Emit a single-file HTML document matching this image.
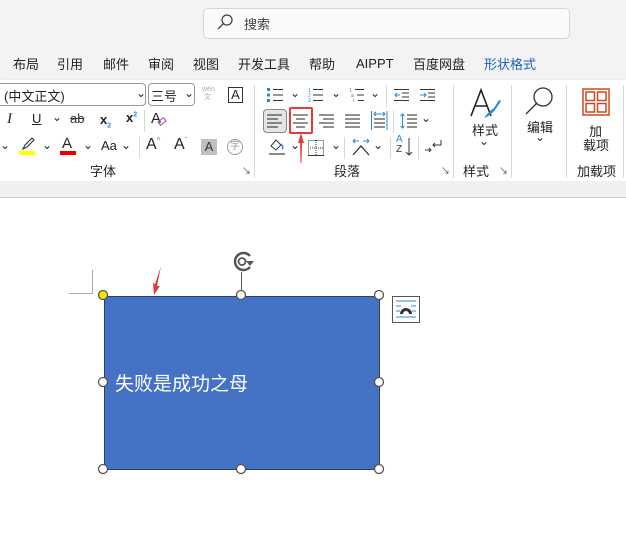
<!DOCTYPE html>
<html><head><meta charset="utf-8"><style>
*{margin:0;padding:0;box-sizing:border-box}
body{width:626px;height:537px;overflow:hidden;background:#fff;font-family:"Liberation Sans","Noto Sans CJK SC",sans-serif;position:relative;color:#222}
.a{position:absolute}
.t{position:absolute;font-size:13px;white-space:nowrap}
.s{font-size:12px}
.vs{position:absolute;width:1px;background:#d8d8d8}
svg{position:absolute;overflow:visible}
</style></head><body>
<div class="a" style="left:0;top:0;width:626px;height:80px;background:#f3f3f3"></div>
<div class="a" style="left:203px;top:8px;width:367px;height:31px;background:#fafafa;border:1px solid #d4d4d4;border-radius:5px"></div>
<svg style="left:217px;top:14px" width="16" height="16"><circle cx="10" cy="6" r="5" fill="none" stroke="#444" stroke-width="1.3"/><line x1="6.5" y1="9.5" x2="1" y2="15" stroke="#444" stroke-width="1.3"/></svg>
<div class="t" style="left:244px;top:14px;color:#444">搜索</div>
<div class="t" style="left:13px;top:54px">布局</div>
<div class="t" style="left:57px;top:54px">引用</div>
<div class="t" style="left:103px;top:54px">邮件</div>
<div class="t" style="left:148px;top:54px">审阅</div>
<div class="t" style="left:193px;top:54px">视图</div>
<div class="t" style="left:238px;top:54px">开发工具</div>
<div class="t" style="left:309px;top:54px">帮助</div>
<div class="t" style="left:356px;top:56px">AIPPT</div>
<div class="t" style="left:413px;top:54px">百度网盘</div>
<div class="t" style="left:484px;top:54px;color:#1f5fbf">形状格式</div>
<!-- ribbon -->
<div class="a" style="left:0;top:80px;width:626px;height:101px;background:#fff;box-shadow:0 1px 3px rgba(0,0,0,.15)"></div>
<div class="a" style="left:0;top:181px;width:626px;height:17px;background:#f0f0f0;border-bottom:1px solid #ccc"></div>
<!-- font group -->
<div class="a" style="left:-4px;top:83px;width:150px;height:23px;border:1px solid #999;border-radius:4px;background:#fff"></div>
<div class="t" style="left:4px;top:86px;color:#222">(中文正文)</div>
<div class="t s" style="left:136px;top:86px">⌄</div>
<div class="a" style="left:148px;top:83px;width:47px;height:23px;border:1px solid #999;border-radius:4px"></div>
<div class="t" style="left:151px;top:86px">三号</div>
<div class="t s" style="left:184px;top:86px">⌄</div>
<div class="t" style="left:202px;top:86px;font-size:7px;color:#aaa;line-height:8px">wén<br>&nbsp;文</div>
<div class="a" style="left:228px;top:87px;width:15px;height:16px;border:1px solid #333;font-size:13px;text-align:center;line-height:14px">A</div>
<div class="t" style="left:7px;top:111px;font-style:italic;font-family:'Liberation Serif',serif;font-size:15px">I</div>
<div class="t" style="left:32px;top:111px;text-decoration:underline">U</div>
<div class="t s" style="left:52px;top:110px">⌄</div>
<div class="t" style="left:70px;top:111px;text-decoration:line-through;color:#333">ab</div>
<div class="t" style="left:100px;top:112px;font-weight:bold">x<sub style="font-size:7px;color:#2b88d8">2</sub></div>
<div class="t" style="left:126px;top:110px;font-weight:bold">x<sup style="font-size:7px;color:#2b88d8">2</sup></div>
<div class="vs" style="left:144px;top:110px;height:22px"></div>
<div class="t" style="left:151px;top:110px;font-size:15px">A</div>
<div class="a" style="left:158px;top:119px;width:8px;height:5px;border:1.5px solid #b03cc0;transform:rotate(-40deg)"></div>
<div class="t s" style="left:0;top:138px">⌄</div>
<div class="a" style="left:19px;top:151px;width:16px;height:4px;background:#ffff00"></div>
<svg style="left:21px;top:137px" width="14" height="13"><path d="M2 12 L4 8 L11 1 L13 3 L6 10 Z" fill="none" stroke="#333" stroke-width="1.1"/></svg>
<div class="t s" style="left:42px;top:138px">⌄</div>
<div class="a" style="left:60px;top:151px;width:16px;height:4px;background:#e00"></div>
<div class="t" style="left:62px;top:135px;font-size:15px">A</div>
<div class="t s" style="left:83px;top:138px">⌄</div>
<div class="t" style="left:101px;top:138px">Aa</div>
<div class="t s" style="left:121px;top:138px">⌄</div>
<div class="vs" style="left:139px;top:136px;height:22px"></div>
<div class="t" style="left:146px;top:136px;font-size:16px">A<span style="font-size:8px;color:#2b88d8;vertical-align:top">^</span></div>
<div class="t" style="left:174px;top:136px;font-size:16px">A<span style="font-size:8px;color:#2b88d8;vertical-align:top">ˇ</span></div>
<div class="a" style="left:201px;top:139px;width:16px;height:16px;background:#c0c0c0;font-size:13px;text-align:center;line-height:16px;color:#333">A</div>
<div class="a" style="left:227px;top:139px;width:16px;height:16px;border:1.3px solid #999;border-radius:50%;font-size:10px;text-align:center;line-height:14px;color:#999">字</div>
<div class="t" style="left:90px;top:161px">字体</div>
<div class="t" style="left:242px;top:164px;font-size:9px;color:#444">↘</div>
<div class="vs" style="left:254px;top:85px;height:93px"></div>
<!-- paragraph -->
<svg style="left:267px;top:88px" width="30" height="14"><g fill="#2b88d8"><rect x="0" y="0" width="3" height="3"/><rect x="0" y="5.5" width="3" height="3"/><rect x="0" y="11" width="3" height="3"/></g><g stroke="#333"><line x1="6" y1="1.5" x2="16" y2="1.5"/><line x1="6" y1="7" x2="16" y2="7"/><line x1="6" y1="12.5" x2="16" y2="12.5"/></g></svg>
<div class="t s" style="left:290px;top:86px">⌄</div>
<svg style="left:308px;top:88px" width="30" height="14"><g font-size="5" fill="#2b88d8" font-family="Liberation Sans"><text x="0" y="4">1</text><text x="0" y="9">2</text><text x="0" y="14">3</text></g><g stroke="#333"><line x1="5" y1="1.5" x2="15" y2="1.5"/><line x1="5" y1="7" x2="15" y2="7"/><line x1="5" y1="12.5" x2="15" y2="12.5"/></g></svg>
<div class="t s" style="left:331px;top:86px">⌄</div>
<svg style="left:349px;top:88px" width="30" height="14"><g font-size="5" fill="#2b88d8" font-family="Liberation Sans"><text x="0" y="4">1</text><text x="2" y="9">a</text><text x="4" y="14">i</text></g><g stroke="#333"><line x1="6" y1="1.5" x2="15" y2="1.5"/><line x1="8" y1="7" x2="15" y2="7"/><line x1="9" y1="12.5" x2="15" y2="12.5"/></g></svg>
<div class="t s" style="left:370px;top:86px">⌄</div>
<div class="vs" style="left:386px;top:85px;height:22px"></div>
<svg style="left:394px;top:88px" width="16" height="14"><g stroke="#333"><line x1="0" y1="1.5" x2="15" y2="1.5"/><line x1="8" y1="5" x2="15" y2="5"/><line x1="8" y1="9" x2="15" y2="9"/><line x1="0" y1="12.5" x2="15" y2="12.5"/></g><path d="M6 7H1M3 5L1 7L3 9" stroke="#2b88d8" fill="none"/></svg>
<svg style="left:420px;top:88px" width="16" height="14"><g stroke="#333"><line x1="0" y1="1.5" x2="15" y2="1.5"/><line x1="8" y1="5" x2="15" y2="5"/><line x1="8" y1="9" x2="15" y2="9"/><line x1="0" y1="12.5" x2="15" y2="12.5"/></g><path d="M0 7H6M4 5L6 7L4 9" stroke="#2b88d8" fill="none"/></svg>
<div class="a" style="left:263px;top:109px;width:24px;height:24px;background:#e5e5e5;border:1px solid #888;border-radius:4px"></div>
<svg style="left:267px;top:114px" width="16" height="14"><g stroke="#222"><line x1="0" y1="1" x2="15" y2="1"/><line x1="0" y1="5" x2="11" y2="5"/><line x1="0" y1="9" x2="15" y2="9"/><line x1="0" y1="13" x2="11" y2="13"/></g></svg>
<div class="a" style="left:289px;top:107px;width:24px;height:27px;border:2px solid #e83a3a;border-radius:2px"></div>
<svg style="left:293px;top:114px" width="16" height="14"><g stroke="#222"><line x1="0" y1="1" x2="15" y2="1"/><line x1="3" y1="5" x2="12" y2="5"/><line x1="0" y1="9" x2="15" y2="9"/><line x1="3" y1="13" x2="12" y2="13"/></g></svg>
<svg style="left:319px;top:114px" width="16" height="14"><g stroke="#222"><line x1="0" y1="1" x2="15" y2="1"/><line x1="4" y1="5" x2="15" y2="5"/><line x1="0" y1="9" x2="15" y2="9"/><line x1="4" y1="13" x2="15" y2="13"/></g></svg>
<svg style="left:345px;top:114px" width="16" height="14"><g stroke="#222"><line x1="0" y1="1" x2="15" y2="1"/><line x1="0" y1="5" x2="15" y2="5"/><line x1="0" y1="9" x2="15" y2="9"/><line x1="0" y1="13" x2="15" y2="13"/></g></svg>
<svg style="left:371px;top:111px" width="17" height="20"><g stroke="#2b88d8"><line x1="0.5" y1="0" x2="0.5" y2="19"/><line x1="16" y1="0" x2="16" y2="19"/><path d="M3 3H14M5 1L3 3L5 5M12 1L14 3L12 5" fill="none"/></g><g stroke="#222"><line x1="3" y1="8" x2="14" y2="8"/><line x1="3" y1="12" x2="14" y2="12"/><line x1="3" y1="16" x2="14" y2="16"/></g></svg>
<div class="vs" style="left:393px;top:111px;height:22px"></div>
<svg style="left:400px;top:113px" width="18" height="16"><path d="M2.5 1V15M0.5 3L2.5 1L4.5 3M0.5 13L2.5 15L4.5 13" stroke="#2b88d8" fill="none"/><g stroke="#222"><line x1="7" y1="2" x2="17" y2="2"/><line x1="7" y1="6" x2="17" y2="6"/><line x1="7" y1="10" x2="17" y2="10"/><line x1="7" y1="14" x2="17" y2="14"/></g></svg>
<div class="t s" style="left:421px;top:111px">⌄</div>
<svg style="left:268px;top:138px" width="18" height="18"><path d="M3 8L8 2L13 7L8 12Z" fill="none" stroke="#333"/><path d="M13 6q3 3 1 5" stroke="#2b88d8" fill="none" stroke-width="1.5"/><line x1="1" y1="16" x2="17" y2="16" stroke="#888" stroke-width="2"/></svg>
<div class="t s" style="left:290px;top:138px">⌄</div>
<svg style="left:308px;top:140px" width="16" height="16"><rect x="0.5" y="0.5" width="15" height="15" fill="none" stroke="#333" stroke-dasharray="1 1"/><line x1="8" y1="0" x2="8" y2="16" stroke="#333" stroke-dasharray="1 1"/><line x1="0" y1="8" x2="16" y2="8" stroke="#333" stroke-dasharray="1 1"/><line x1="0" y1="15.5" x2="16" y2="15.5" stroke="#333"/></svg>
<div class="t s" style="left:331px;top:138px">⌄</div>
<div class="vs" style="left:344px;top:137px;height:22px"></div>
<svg style="left:351px;top:138px" width="20" height="18"><path d="M2 3H8M2 3L4 1M2 3L4 5M12 3H18M18 3L16 1M18 3L16 5" stroke="#2b88d8" fill="none"/><path d="M2 17L10 8L18 17" stroke="#333" fill="none" stroke-width="1.3"/></svg>
<div class="t s" style="left:373px;top:138px">⌄</div>
<div class="vs" style="left:390px;top:137px;height:22px"></div>
<div class="t" style="left:396px;top:135px;font-size:10px;line-height:10px;color:#2b88d8">A<br><span style="color:#333">Z</span></div>
<svg style="left:405px;top:138px" width="8" height="18"><path d="M4 0V17M1 14L4 17L7 14" stroke="#333" fill="none"/></svg>
<div class="vs" style="left:418px;top:137px;height:22px"></div>
<svg style="left:425px;top:140px" width="18" height="14"><path d="M16 0V5H8M10 3L8 5L10 7" stroke="#333" fill="none"/><path d="M0 10H6M4 8L6 10L4 12" stroke="#333" fill="none"/></svg>
<div class="t" style="left:334px;top:161px">段落</div>
<div class="t" style="left:441px;top:164px;font-size:9px;color:#444">↘</div>
<div class="vs" style="left:453px;top:85px;height:93px"></div>
<!-- styles -->
<svg style="left:468px;top:88px" width="34" height="34"><path d="M3 28L13 2L23 28M7 18H19" stroke="#222" stroke-width="1.6" fill="none"/><path d="M16 30q4-6 10-10l5-8 2 1-6 9q-5 6-11 8Z" fill="#2b88d8"/></svg>
<div class="t" style="left:472px;top:120px">样式</div>
<div class="t s" style="left:479px;top:134px">⌄</div>
<div class="t" style="left:463px;top:161px">样式</div>
<div class="t" style="left:499px;top:164px;font-size:9px;color:#444">↘</div>
<div class="vs" style="left:511px;top:85px;height:93px"></div>
<svg style="left:524px;top:86px" width="32" height="30"><circle cx="19" cy="11" r="9" fill="none" stroke="#333" stroke-width="1.3"/><line x1="12.5" y1="17.5" x2="2" y2="28" stroke="#333" stroke-width="1.3"/></svg>
<div class="t" style="left:527px;top:117px">编辑</div>
<div class="t s" style="left:535px;top:130px">⌄</div>
<div class="vs" style="left:566px;top:85px;height:93px"></div>
<svg style="left:582px;top:88px" width="28" height="28"><g fill="none" stroke="#d04a1f" stroke-width="1.5"><rect x="1" y="1" width="26" height="26"/><rect x="4" y="4" width="8.5" height="8.5"/><rect x="15.5" y="4" width="8.5" height="8.5"/><rect x="4" y="15.5" width="8.5" height="8.5"/><rect x="15.5" y="15.5" width="8.5" height="8.5"/></g></svg>
<div class="t" style="left:589px;top:121px">加</div>
<div class="t" style="left:583px;top:135px">载项</div>
<div class="t" style="left:577px;top:161px">加载项</div>
<div class="vs" style="left:623px;top:85px;height:93px"></div>
<!-- red arrow in ribbon -->
<svg style="left:296px;top:133px" width="10" height="30"><path d="M5 0L8 10H6L5.5 30H4.5L4 10H2Z" fill="#e83a3a"/></svg>
<!-- document -->
<div class="a" style="left:69px;top:293px;width:24px;height:1px;background:#aaa"></div>
<div class="a" style="left:92px;top:270px;width:1px;height:24px;background:#aaa"></div>
<svg style="left:150px;top:266px" width="12" height="30"><path d="M11 0L7 20L10 20L4 29L3 17L5 18Z" fill="#e83a3a"/></svg>
<div class="a" style="left:104px;top:296px;width:276px;height:174px;background:#4472c4;border:1.5px solid #2f3f5f"></div>
<div class="t" style="left:115px;top:369px;font-size:19px;color:#fff">失败是成功之母</div>
<div class="a" style="left:241px;top:272px;width:1px;height:24px;background:#555"></div>
<svg style="left:230px;top:250px" width="28" height="24"><path d="M20 6A8.5 8.5 0 1 0 20 17" fill="none" stroke="#555" stroke-width="2.5"/><circle cx="12" cy="11.5" r="3.5" fill="none" stroke="#555" stroke-width="1.8"/><path d="M16 11L24 11L20 16Z" fill="#555"/></svg>
<svg style="left:96px;top:288px" width="292" height="190">
<g fill="#fff" stroke="#555" stroke-width="1.3">
<circle cx="145" cy="7" r="4.5"/><circle cx="283" cy="7" r="4.5"/>
<circle cx="7" cy="94" r="4.5"/><circle cx="283" cy="94" r="4.5"/>
<circle cx="7" cy="181" r="4.5"/><circle cx="145" cy="181" r="4.5"/><circle cx="283" cy="181" r="4.5"/>
</g><circle cx="7" cy="7" r="4.5" fill="#ffe000" stroke="#555" stroke-width="1.3"/></svg>
<div class="a" style="left:392px;top:296px;width:28px;height:27px;border:1px solid #555;background:#fff"></div>
<svg style="left:396px;top:300px" width="20" height="20"><g stroke="#2b88d8"><line x1="0" y1="1" x2="20" y2="1"/><line x1="0" y1="6" x2="5" y2="6"/><line x1="15" y1="6" x2="20" y2="6"/><line x1="0" y1="11" x2="4" y2="11"/><line x1="16" y1="11" x2="20" y2="11"/><line x1="0" y1="17" x2="20" y2="17"/></g><path d="M4 14A6 6 0 0 1 16 14H13A3 3 0 0 0 7 14Z" fill="#333"/></svg>
</body></html>
